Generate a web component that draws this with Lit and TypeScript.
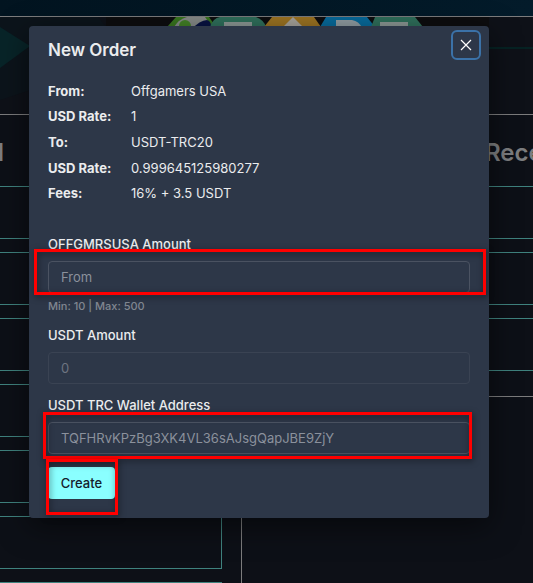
import { LitElement, html, css } from "lit";
import { customElement, property } from "lit/decorators.js";

@customElement("exchange-page")
class ExchangePage extends LitElement {
  static styles = css`
    :host {
      display: block;
      background: #0d1017;
      font-family: Inter, "Open Sans", sans-serif;
    }
    .bar {
      height: 16px;
      background: linear-gradient(90deg, #021420, #031b2a);
    }
    .banner {
      display: block;
      height: 97px;
      overflow: hidden;
      border-top: 1px solid #7c7c7d;
      border-bottom: 1px solid #7c7c7d;
      background: #0e1118;
    }
    .banner svg {
      display: block;
    }
    .columns {
      display: flex;
      align-items: flex-start;
    }
    .panel {
      box-sizing: border-box;
      padding: 20px 19px 26px 0;
    }
    .left {
      flex: none;
      width: 242px;
      border-right: 1px solid #7c7c7d;
    }
    .right {
      flex: 1;
      min-width: 0;
      margin-left: 20px;
      padding: 20px 0 25px 20px;
      border-bottom: 1px solid #7c7c7d;
    }
    h2 {
      margin: 0 0 15px;
      font-size: 24px;
      line-height: 36px;
      font-weight: 600;
      color: #7c7d7f;
      white-space: nowrap;
    }
    .left h2 {
      display: flex;
      justify-content: flex-end;
      width: 4px;
    }
    .right h2 {
      padding-left: 203px;
    }
    .card {
      box-sizing: border-box;
      height: 53px;
      margin-bottom: 13px;
      border: 1px solid #3f827e;
      border-left: 0;
    }
    .right .card {
      border-right: 0;
    }
    .card:last-child {
      margin-bottom: 0;
    }
  `;

  render() {
    const rows = (n: number) => Array.from({ length: n }, () => html`<div class="card"></div>`);
    return html`
      <div class="bar"></div>
      <div class="banner">
        <svg width="533" height="97" viewBox="0 17 533 97" aria-hidden="true">
          <path d="M0 17H98L106 27L70 77L0 100Z" fill="#0c141b" />
          <path d="M-20 27H0L30 46L0 68H-20Z" fill="#082428" />
          <path d="M489 48H533" stroke="#062223" stroke-width="2" />
          <path d="M106 17H489V30H106Z" fill="#0d0d0f" />
          <path d="M167 27L176 17H209L216 27V60H167Z" fill="#38751f" />
          <path d="M174 27Q179 19 187 17H205L212 27V60H174Z" fill="#858a87" />
          <circle cx="185" cy="26" r="6" fill="#428126" />
          <path d="M191 30Q200 20 207 20Q212 21 211 30Z" fill="#081342" />
          <path d="M210 27Q213 18 220 17H256Q264 20 266 27V60H210Z" fill="#2f6f5b" />
          <path d="M224 22H252V31H224Z" fill="#8b9693" />
          <path d="M264 27L272 17H314L321 27V60H264Z" fill="#9b7322" />
          <path d="M293 17L304 28H282Z" fill="#a5a29a" />
          <path d="M320 27L326 17H367L375 27V60H320Z" fill="#076a9b" />
          <path d="M336 20H352Q359 21 362 28H336Z" fill="#8f9ba1" />
          <path d="M371 27L375 17H415L423 27V60H371Z" fill="#2f6f5b" />
          <path d="M380 22H408V31H380Z" fill="#8b9693" />
        </svg>
      </div>
      <div class="columns">
        <section class="panel left">
          <h2>Send</h2>
          ${rows(7)}
        </section>
        <section class="panel right">
          <h2>Receive</h2>
          ${rows(3)}
        </section>
      </div>
    `;
  }
}

@customElement("order-dialog")
class OrderDialog extends LitElement {
  @property({ attribute: false }) details: [string, string][] = [
    ["From:", "Offgamers USA"],
    ["USD Rate:", "1"],
    ["To:", "USDT-TRC20"],
    ["USD Rate:", "0.999645125980277"],
    ["Fees:", "16% + 3.5 USDT"],
  ];

  static styles = css`
    :host {
      display: block;
      box-sizing: border-box;
      padding: 13px 19px 19px;
      border-radius: 4px;
      background: #2d3748;
      box-shadow: 0 8px 30px rgba(0, 0, 0, 0.5);
      color: #ebecee;
      font-family: Inter, "Open Sans", sans-serif;
      font-size: 13px;
      line-height: 20px;
    }
    header {
      position: relative;
    }
    h1 {
      margin: 0 0 17px;
      font-size: 17px;
      line-height: 22px;
      font-weight: 600;
    }
    .close {
      position: absolute;
      top: -9px;
      right: -11px;
      display: flex;
      align-items: center;
      justify-content: center;
      width: 30px;
      height: 30px;
      padding: 0;
      border: 2px solid #3b72a8;
      border-radius: 6px;
      box-sizing: border-box;
      background: none;
      color: #fff;
    }
    dl {
      display: grid;
      grid-template-columns: 83px 1fr;
      grid-auto-rows: 1fr;
      align-items: center;
      height: 128px;
      margin: 0 0 28px;
    }
    dt {
      font-weight: 700;
    }
    dd {
      margin: 0;
    }
    .field {
      margin-bottom: 11px;
    }
    label {
      display: block;
      margin-bottom: 7px;
      font-weight: 500;
    }
    .control {
      position: relative;
    }
    input {
      display: block;
      box-sizing: border-box;
      width: 100%;
      height: 32px;
      padding: 0 12px;
      border: 1px solid #4b5362;
      border-radius: 4px;
      outline: none;
      background: none;
      color: #ebecee;
      font: inherit;
    }
    input::placeholder {
      color: #8b919c;
      opacity: 1;
    }
    input:disabled {
      border-color: #3a4353;
      color: #6d7481;
    }
    .help {
      margin-top: 5px;
      font-size: 11px;
      line-height: 16px;
      font-weight: 500;
      color: #818791;
    }
    .action {
      position: relative;
      width: max-content;
      margin-top: 13px;
    }
    .create {
      display: block;
      width: 67px;
      height: 32px;
      padding: 0;
      border: 0;
      border-radius: 4px;
      background: #8affff;
      color: #14202b;
      font: inherit;
      font-weight: 500;
    }
    .mark {
      position: absolute;
      border: 3px solid #f00;
      filter: drop-shadow(1px 2px 3px rgba(0, 0, 0, 0.5));
      pointer-events: none;
    }
    .mark.wide {
      inset: -12px -16px -2px -14px;
    }
    .mark.snug {
      inset: -10px -2px -5px -5px;
    }
    .mark.tall {
      inset: -8px -3px -16px -2px;
    }
  `;

  render() {
    return html`
      <header>
        <h1>New Order</h1>
        <button class="close" aria-label="Close">
          <svg width="12" height="12" viewBox="0 0 12 12" aria-hidden="true">
            <path d="M1 1L11 11M11 1L1 11" stroke="currentColor" stroke-width="1.2" />
          </svg>
        </button>
      </header>
      <dl>${this.details.map(([k, v]) => html`<dt>${k}</dt><dd>${v}</dd>`)}</dl>
      <div class="field">
        <label for="from">OFFGMRSUSA Amount</label>
        <div class="control">
          <input id="from" placeholder="From" />
          <div class="mark wide"></div>
        </div>
        <div class="help">Min: 10 | Max: 500</div>
      </div>
      <div class="field">
        <label for="to">USDT Amount</label>
        <input id="to" value="0" disabled />
      </div>
      <div>
        <label for="wallet">USDT TRC Wallet Address</label>
        <div class="control">
          <input id="wallet" placeholder="TQFHRvKPzBg3XK4VL36sAJsgQapJBE9ZjY" />
          <div class="mark snug"></div>
        </div>
      </div>
      <div class="action">
        <button class="create">Create</button>
        <div class="mark tall"></div>
      </div>
    `;
  }
}

@customElement("app-root")
class AppRoot extends LitElement {
  static styles = css`
    :host {
      display: block;
      position: relative;
      height: 100vh;
      overflow: hidden;
      background: #0d1017;
    }
    .overlay {
      position: absolute;
      inset: 0;
      padding: 26px 44px 0 29px;
    }
  `;

  render() {
    return html`
      <exchange-page></exchange-page>
      <div class="overlay">
        <order-dialog role="dialog" aria-label="New Order"></order-dialog>
      </div>
    `;
  }
}
